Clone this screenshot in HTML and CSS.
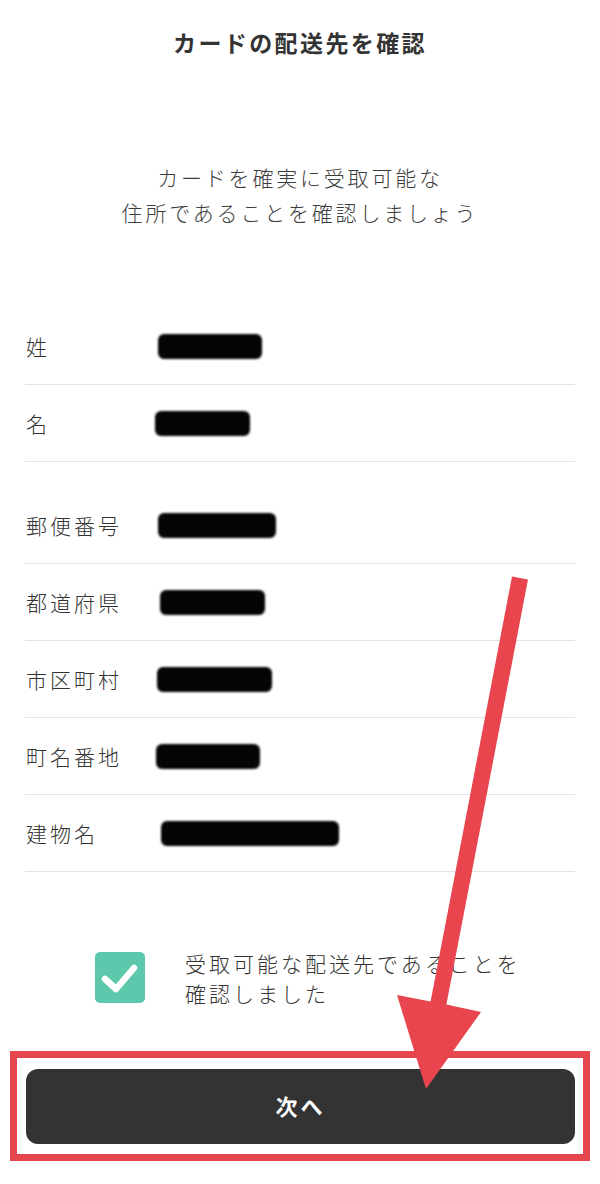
FILE: index.html
```html
<!DOCTYPE html>
<html lang="ja">
<head>
    <meta charset="UTF-8">
    <meta name="viewport" content="width=device-width, initial-scale=1.0">
    <title>カードの配送先を確認</title>
    <link rel="stylesheet" href="styles.css">
</head>
<body>
    <div class="page">
        <div class="header">
            <h1>カードの配送先を確認</h1>
        </div>

        <p class="intro">カードを確実に受取可能な<br>住所であることを確認しましょう</p>

        <div class="address-list">
            <div class="group">
                <div class="row">
                    <span class="label">姓</span>
                    <span class="mask mask-sei"></span>
                </div>
                <div class="row">
                    <span class="label">名</span>
                    <span class="mask mask-mei"></span>
                </div>
            </div>

            <div class="group">
                <div class="row">
                    <span class="label">郵便番号</span>
                    <span class="mask mask-zip"></span>
                </div>
                <div class="row">
                    <span class="label">都道府県</span>
                    <span class="mask mask-pref"></span>
                </div>
                <div class="row">
                    <span class="label">市区町村</span>
                    <span class="mask mask-city"></span>
                </div>
                <div class="row">
                    <span class="label">町名番地</span>
                    <span class="mask mask-street"></span>
                </div>
                <div class="row">
                    <span class="label">建物名</span>
                    <span class="mask mask-building"></span>
                </div>
            </div>
        </div>

        <label class="confirm">
            <span class="checkbox">
                <svg width="50" height="51" viewBox="0 0 50 51">
                    <rect x="0" y="0" width="50" height="51" rx="5" fill="#5ec8ad"/>
                    <path d="M10 27 L21 37 L39 16" fill="none" stroke="#fff" stroke-width="6.5" stroke-linecap="round" stroke-linejoin="round"/>
                </svg>
            </span>
            <span class="confirm-text">受取可能な配送先であることを<br>確認しました</span>
        </label>

        <div class="highlight">
            <button class="next-btn">次へ</button>
        </div>

        <svg class="annotation" width="600" height="1184" viewBox="0 0 600 1184">
            <polygon points="512,576.5 528,579.5 446.4,1004.5 481,1012 426,1089 397,995 430.6,1001.5" fill="#e8454e"/>
        </svg>
    </div>
</body>
</html>
```

FILE: styles.css
```css
* {
    margin: 0;
    padding: 0;
    box-sizing: border-box;
}

body {
    font-family: "Noto Sans CJK JP", "Noto Sans", sans-serif;
    background: #fff;
    color: #333;
    overflow: hidden;
}

.page {
    position: relative;
    width: 600px;
    height: 1184px;
}

.header {
    padding-top: 25px;
    text-align: center;
}

.header h1 {
    font-size: 23px;
    font-weight: 700;
    line-height: 34px;
    letter-spacing: 2.4px;
    color: #333;
}

.intro {
    margin-top: 101px;
    text-align: center;
    font-size: 21px;
    font-weight: 300;
    line-height: 35px;
    letter-spacing: 2.8px;
    color: #3c3c3c;
}

.address-list {
    margin-top: 78px;
    padding: 0 25px 0 25px;
}

.group + .group {
    margin-top: 25px;
}

.row {
    display: flex;
    align-items: center;
    height: 77px;
    border-bottom: 1px solid #e3e3e3;
}

.label {
    width: 131px;
    padding-left: 1px;
    font-size: 21px;
    font-weight: 300;
    letter-spacing: 3px;
    color: #333;
}

.mask {
    display: block;
    height: 25px;
    background: #050505;
    border-radius: 6px;
    filter: blur(1.2px);
}

.mask-sei { width: 104px; margin-left: 2px; }
.mask-mei { width: 95px; margin-left: -1px; }
.mask-zip { width: 118px; margin-left: 2px; }
.mask-pref { width: 105px; margin-left: 4px; }
.mask-city { width: 115px; margin-left: 1px; }
.mask-street { width: 104px; }
.mask-building { width: 178px; margin-left: 5px; }

.confirm {
    display: flex;
    align-items: center;
    gap: 40px;
    margin-top: 76px;
    padding-left: 95px;
}

.checkbox {
    display: block;
    width: 50px;
    height: 51px;
    margin-top: -2px;
}

.checkbox svg {
    display: block;
}

.confirm-text {
    font-size: 21px;
    font-weight: 300;
    line-height: 30px;
    letter-spacing: 3px;
    color: #333;
}

.highlight {
    margin: 43px 10px 0 10px;
    padding: 11px 8px 10px 9px;
    border: 7px solid #e8464f;
}

.next-btn {
    display: block;
    width: 100%;
    height: 75px;
    padding-bottom: 4px;
    border: none;
    border-radius: 12px;
    background: #333;
    color: #fff;
    font-family: "Noto Sans CJK JP", "Noto Sans", sans-serif;
    font-size: 22px;
    font-weight: 700;
    letter-spacing: 3px;
    cursor: pointer;
}

.annotation {
    position: absolute;
    top: 0;
    left: 0;
    pointer-events: none;
}
```
